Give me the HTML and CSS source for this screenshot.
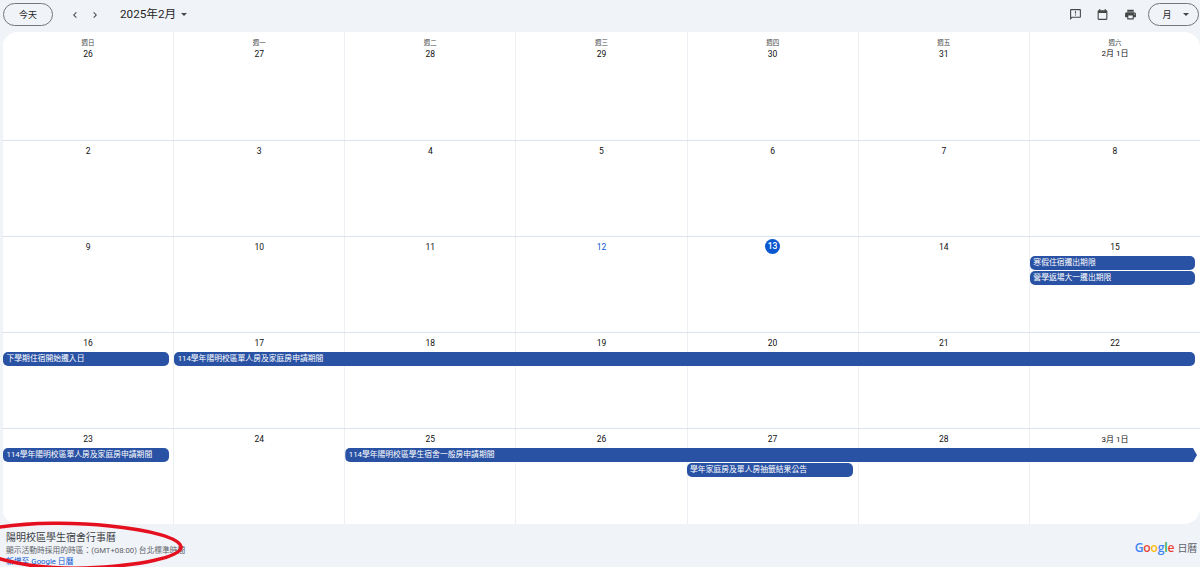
FILE: index.html
```html
<!DOCTYPE html>
<html lang="zh-Hant">
<head>
<meta charset="utf-8">
<title>陽明校區學生宿舍行事曆</title>
<link rel="stylesheet" href="styles.css">
</head>
<body>
<div class="page">
  <header class="toolbar">
    <div class="tb-left">
      <button class="pill today">今天</button>
      <div class="navs">
        <svg class="chev" viewBox="0 0 24 24"><path d="M15.41 7.41 14 6l-6 6 6 6 1.41-1.41L10.83 12z"/></svg>
        <svg class="chev" viewBox="0 0 24 24"><path d="M8.59 16.59 10 18l6-6-6-6-1.41 1.41L13.17 12z"/></svg>
      </div>
      <span class="title">2025年2月</span>
      <span class="caret"></span>
    </div>
    <div class="tb-right">
      <svg class="icon" viewBox="0 0 24 24"><path d="M20 2H4c-1.1 0-2 .9-2 2v18l4-4h14c1.1 0 2-.9 2-2V4c0-1.1-.9-2-2-2zm0 14H5.17L4 17.17V4h16v12zM11 12h2v2h-2zm0-6h2v4h-2z"/></svg>
      <svg class="icon" viewBox="0 0 24 24"><path d="M19 4h-1V2h-2v2H8V2H6v2H5c-1.1 0-2 .9-2 2v14c0 1.1.9 2 2 2h14c1.1 0 2-.9 2-2V6c0-1.1-.9-2-2-2zm0 16H5V9h14v11z"/></svg>
      <svg class="icon" viewBox="0 0 24 24"><path d="M19 8H5c-1.66 0-3 1.34-3 3v6h4v4h12v-4h4v-6c0-1.66-1.34-3-3-3zm-3 11H8v-5h8v5zm3-7c-.55 0-1-.45-1-1s.45-1 1-1 1 .45 1 1-.45 1-1 1zm-1-9H6v4h12V3z"/></svg>
      <button class="pill view">月<span class="caret small"></span></button>
    </div>
  </header>

  <main class="calendar">
    <section class="week first">
      <div class="day"><span class="dow">週日</span><span class="num">26</span></div>
      <div class="day"><span class="dow">週一</span><span class="num">27</span></div>
      <div class="day"><span class="dow">週二</span><span class="num">28</span></div>
      <div class="day"><span class="dow">週三</span><span class="num">29</span></div>
      <div class="day"><span class="dow">週四</span><span class="num">30</span></div>
      <div class="day"><span class="dow">週五</span><span class="num">31</span></div>
      <div class="day"><span class="dow">週六</span><span class="num long">2月 1日</span></div>
    </section>
    <section class="week">
      <div class="day"><span class="num">2</span></div>
      <div class="day"><span class="num">3</span></div>
      <div class="day"><span class="num">4</span></div>
      <div class="day"><span class="num">5</span></div>
      <div class="day"><span class="num">6</span></div>
      <div class="day"><span class="num">7</span></div>
      <div class="day"><span class="num">8</span></div>
    </section>
    <section class="week">
      <div class="day"><span class="num">9</span></div>
      <div class="day"><span class="num">10</span></div>
      <div class="day"><span class="num">11</span></div>
      <div class="day"><span class="num blue">12</span></div>
      <div class="day"><span class="num now">13</span></div>
      <div class="day"><span class="num">14</span></div>
      <div class="day"><span class="num">15</span></div>
      <div class="event c7 w1 r1">寒假住宿遷出期限</div>
      <div class="event c7 w1 r2">營學返場大一遷出期限</div>
    </section>
    <section class="week">
      <div class="day"><span class="num">16</span></div>
      <div class="day"><span class="num">17</span></div>
      <div class="day"><span class="num">18</span></div>
      <div class="day"><span class="num">19</span></div>
      <div class="day"><span class="num">20</span></div>
      <div class="day"><span class="num">21</span></div>
      <div class="day"><span class="num">22</span></div>
      <div class="event c1 w1 r1">下學期住宿開始遷入日</div>
      <div class="event c2 w6 r1">114學年陽明校區單人房及家庭房申請期間</div>
    </section>
    <section class="week">
      <div class="day"><span class="num">23</span></div>
      <div class="day"><span class="num">24</span></div>
      <div class="day"><span class="num">25</span></div>
      <div class="day"><span class="num">26</span></div>
      <div class="day"><span class="num">27</span></div>
      <div class="day"><span class="num">28</span></div>
      <div class="day"><span class="num long">3月 1日</span></div>
      <div class="event c1 w1 r1">114學年陽明校區單人房及家庭房申請期間</div>
      <div class="event c3 w5 r1 cont">114學年陽明校區學生宿舍一般房申請期間</div>
      <div class="event c5 w1 r2">學年家庭房及單人房抽籤結果公告</div>
    </section>
  </main>

  <footer class="foot">
    <div class="info">
      <div class="cal-name">陽明校區學生宿舍行事曆</div>
      <div class="tz">顯示活動時採用的時區：(GMT+08:00) 台北標準時間</div>
      <a class="add" href="#">新增至 Google 日曆</a>
    </div>
    <div class="brand"><span class="g-blue">G</span><span class="g-red">o</span><span class="g-yellow">o</span><span class="g-blue">g</span><span class="g-green">l</span><span class="g-red">e</span><span class="brand-name">日曆</span></div>
  </footer>

  <svg class="scribble" viewBox="0 0 1200 567"><path d="M-6 528C30 522 75 522 110 526C150 530 180 538 181 547C181 557 140 566 85 568C45 569 15 564 -6 557"/></svg>
</div>
</body>
</html>
```
FILE: styles.css
```css
* { box-sizing: border-box; }
html, body { margin: 0; height: 100%; }
body {
  background: #f0f4f9;
  color: #1f1f1f;
  font-family: Roboto, "Noto Sans CJK TC", sans-serif;
  overflow: hidden;
}
.page { position: relative; width: 1200px; height: 567px; overflow: hidden; display: flex; flex-direction: column; }

.toolbar { height: 32px; display: flex; justify-content: space-between; align-items: flex-start; padding: 3px 1px 0 3px; flex: none; }
.tb-left, .tb-right { display: flex; align-items: center; height: 23px; }
.pill {
  height: 23px; border: 1px solid #747775; border-radius: 12px; background: transparent;
  font-family: Roboto, "Noto Sans CJK TC", sans-serif; font-size: 9px; color: #1f1f1f; padding: 0;
  display: flex; align-items: center; justify-content: center;
}
.today { width: 50px; }
.navs { display: flex; gap: 8px; margin-left: 16px; }
.chev { width: 12px; height: 12px; fill: #444746; display: block; }
.title { font-size: 11.7px; margin-left: 19px; color: #1f1f1f; line-height: 23px; }
.caret { width: 0; height: 0; border-left: 3px solid transparent; border-right: 3px solid transparent; border-top: 3px solid #444746; margin-left: 5px; }
.caret.small { margin-left: 11px; }
.tb-right { gap: 14.5px; }
.icon { width: 13px; height: 13px; fill: #444746; display: block; }
.view { width: 51px; margin-left: -3px; padding-left: 4px; }

.calendar { height: 492px; margin-left: 2px; background: #fff; border-radius: 16px; display: flex; flex-direction: column; overflow: hidden; flex: none; }
.week {
  flex: none; height: 96px; display: grid;
  grid-template-columns: repeat(7, minmax(0, 1fr));
  grid-template-rows: 19px 15px 15px 1fr;
  border-top: 1px solid #dde3ea;
}
.week.first { height: 108px; border-top: 0; grid-template-rows: 1fr; }
.day { grid-row: 1 / -1; border-left: 1px solid #eceff3; display: flex; flex-direction: column; align-items: center; min-width: 0; }
.day:nth-child(1) { grid-column: 1; border-left-color: #f0f4f9; }
.day:nth-child(2) { grid-column: 2; }
.day:nth-child(3) { grid-column: 3; }
.day:nth-child(4) { grid-column: 4; }
.day:nth-child(5) { grid-column: 5; }
.day:nth-child(6) { grid-column: 6; }
.day:nth-child(7) { grid-column: 7; }
.num { font-size: 8.5px; line-height: 19px; padding-top: 1px; color: #111; }
.num.long { font-size: 8px; }
.num.blue { color: #0b57d0; }
.num.now { width: 15px; height: 15px; border-radius: 50%; background: #0b57d0; color: #fff; font-weight: 500; line-height: 15px; text-align: center; margin-top: 2px; padding-top: 0; }
.dow { font-size: 6.5px; line-height: 9px; margin-top: 7px; color: #444746; }
.first .num { line-height: 12px; padding-top: 0; }
.event {
  background: #2a52a4; color: #fff; font-size: 7.8px; line-height: 14px; height: 14px;
  border-radius: 5px; padding-left: 3.5px; margin: 0 4px 0 1px; white-space: nowrap; overflow: hidden;
  align-self: start; z-index: 1; min-width: 0;
}
.c1 { grid-column-start: 1; } .c2 { grid-column-start: 2; } .c3 { grid-column-start: 3; } .c5 { grid-column-start: 5; } .c7 { grid-column-start: 7; }
.w1 { grid-column-end: span 1; } .w5 { grid-column-end: span 5; } .w6 { grid-column-end: span 6; }
.r1 { grid-row: 2; } .r2 { grid-row: 3; }
.c5.w1 { margin: 0 5px 0 0; }
.c7.w1 { margin-right: 5px; }
.c2.w6 { margin-right: 5px; }
.cont { margin-right: 3px; clip-path: polygon(0 0, calc(100% - 4px) 0, 100% 50%, calc(100% - 4px) 100%, 0 100%); border-radius: 5px 0 0 5px; }

.foot { flex: 1; display: flex; justify-content: space-between; align-items: flex-start; padding: 7px 3px 0 6px; }
.cal-name { font-size: 10px; line-height: 13px; color: #3c4043; }
.tz { font-size: 7.75px; line-height: 11px; color: #5f6368; margin-top: 1px; }
.add { display: block; font-size: 7.8px; line-height: 11px; color: #0b57d0; text-decoration: none; }
.brand { font-family: "Open Sans", sans-serif; font-size: 12.2px; line-height: 18px; margin-top: 8px; letter-spacing: -0.2px; font-weight: 600; }
.brand-name { font-family: "Noto Sans CJK TC", sans-serif; font-size: 10px; font-weight: 400; color: #5f6368; margin-left: 3px; }
.g-blue { color: #4285f4; } .g-red { color: #ea4335; } .g-yellow { color: #fbbc05; } .g-green { color: #34a853; }

.scribble { position: absolute; inset: 0; width: 1200px; height: 567px; pointer-events: none; }
.scribble path { fill: none; stroke: #e5101f; stroke-width: 3.5; }
```
